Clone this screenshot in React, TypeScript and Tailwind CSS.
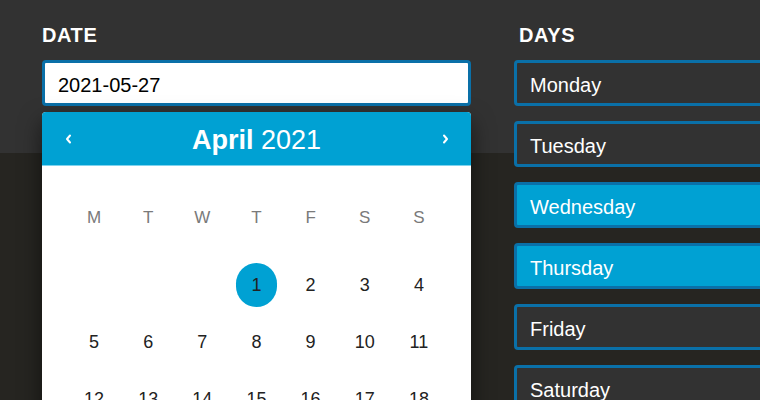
const font = { fontFamily: '"Liberation Sans", Arial, sans-serif' };

const days = [
  { name: "Monday", on: false },
  { name: "Tuesday", on: false },
  { name: "Wednesday", on: true },
  { name: "Thursday", on: true },
  { name: "Friday", on: false },
  { name: "Saturday", on: false },
  { name: "Sunday", on: false },
];

const weekdays = ["M", "T", "W", "T", "F", "S", "S"];

// April 2021 starts on a Thursday
const cells: (number | null)[] = [null, null, null, ...Array.from({ length: 30 }, (_, i) => i + 1)];

function Chevron({ dir }: { dir: "left" | "right" }) {
  return (
    <svg width="7" height="10" viewBox="0 0 7 10" fill="none">
      <path
        d={dir === "left" ? "M5 1.5 L2 5 L5 8.5" : "M2 1.5 L5 5 L2 8.5"}
        stroke="white"
        strokeWidth="2"
        strokeLinecap="round"
        strokeLinejoin="round"
      />
    </svg>
  );
}

export default function App() {
  return (
    <div
      style={font}
      className="w-[760px] h-[400px] overflow-hidden flex items-start gap-[43px] pl-[42px] pt-[23px] bg-[linear-gradient(to_bottom,#323232_153px,#262521_153px)]"
    >
      {/* date picker */}
      <div className="w-[429px] shrink-0 flex flex-col">
        <div className="shrink-0 text-[20px] leading-[24px] font-bold tracking-[0.03em] text-white mb-[13px]">DATE</div>
        <div className="shrink-0 h-[46px] border-[3px] border-[#0a70a8] rounded-[4px] bg-white flex items-center pl-[13px] pt-[3px] text-[20px] leading-[24px] text-black">
          2021-05-27
        </div>
        <div className="shrink-0 mt-[6px] rounded-t-[4px] bg-white shadow-[0_10px_22px_rgba(0,0,0,0.55)]">
          <div className="h-[54px] bg-[#00a1d3] rounded-t-[4px] border-b border-[#7fd3ee] grid grid-cols-[1fr_auto_1fr] items-center">
            <div className="pl-[23px] flex">
              <Chevron dir="left" />
            </div>
            <div className="text-white text-[27px] leading-[32px] pt-[2px]">
              <span className="font-bold">April</span> 2021
            </div>
            <div className="pr-[22px] flex justify-end">
              <Chevron dir="right" />
            </div>
          </div>
          <div className="px-[25px] pt-[30px]">
            <div className="grid grid-cols-7 h-[44px] items-center text-[17px] text-[#7a7a7a]">
              {weekdays.map((d, i) => (
                <div key={i} className="text-center">
                  {d}
                </div>
              ))}
            </div>
            <div className="grid grid-cols-7 gap-y-[13px] mt-[23px] text-[18px] text-[#222]">
              {cells.map((c, i) => (
                <div key={i} className="flex justify-center">
                  <div
                    className={
                      c === 1
                        ? "w-[41px] h-[44px] rounded-full bg-[#00a1d3] flex items-center justify-center"
                        : "w-[41px] h-[44px] flex items-center justify-center"
                    }
                  >
                    {c}
                  </div>
                </div>
              ))}
            </div>
          </div>
        </div>
      </div>

      {/* days */}
      <div className="w-[430px] shrink-0 flex flex-col">
        <div className="shrink-0 text-[20px] leading-[24px] font-bold tracking-[0.03em] text-white mb-[13px] pl-[5px]">DAYS</div>
        <div className="flex flex-col gap-[15px]">
          {days.map((d) => (
            <div
              key={d.name}
              className={
                d.on
                  ? "shrink-0 h-[46px] border-[3px] border-[#0a70a8] rounded-[4px] bg-[#00a1d3] flex items-center pl-[13px] pt-[3px] text-[20px] leading-[24px] text-white"
                  : "shrink-0 h-[46px] border-[3px] border-[#0a70a8] rounded-[4px] bg-[#323232] flex items-center pl-[13px] pt-[3px] text-[20px] leading-[24px] text-white"
              }
            >
              {d.name}
            </div>
          ))}
        </div>
      </div>
    </div>
  );
}
